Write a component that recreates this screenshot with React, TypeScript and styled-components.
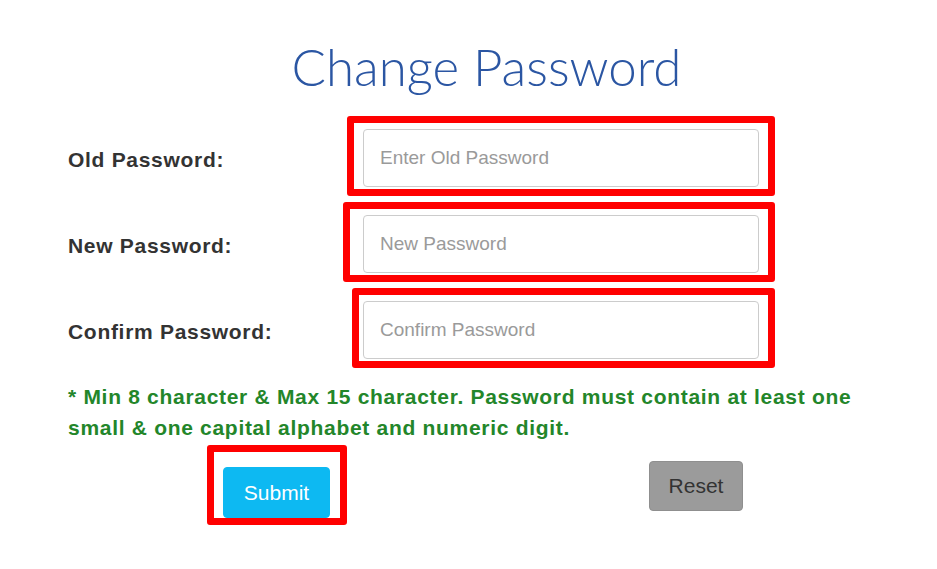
import React from 'react';
import styled, { createGlobalStyle } from 'styled-components';


const GlobalStyle = createGlobalStyle`
    body {
        margin: 0;
        background: #ffffff;
        font-family: 'Liberation Sans', Arial, sans-serif;
    }
`;

const Page = styled.div`
    width: 937px;
    height: 569px;
    padding-top: 37px;
    box-sizing: border-box;
    overflow: hidden;
`;

const Title = styled.h1`
    margin: 0 0 19px 0;
    padding-left: 36px;
    text-align: center;
    font-family: 'Lato', sans-serif;
    font-weight: 300;
    font-size: 51px;
    line-height: 60px;
    color: #2b56a3;
`;

const Form = styled.form`
    display: flex;
    flex-direction: column;
    gap: 6px;
    padding-left: 68px;
`;

const Row = styled.div`
    display: grid;
    grid-template-columns: 275px 432px;
    align-items: center;
`;

const Label = styled.label`
    padding-top: 8px;
    font-size: 21px;
    font-weight: bold;
    letter-spacing: 0.7px;
    color: #333333;
`;

const Highlight = styled.div<{ $inset : number }>`
    margin-left: ${p => p.$inset}px;
    padding: 6px 9px 2px ${p => 13 - p.$inset}px;
    border: 7px solid #ff0000;
    border-radius: 3px;
    display: flex;
`;

const Input = styled.input`
    width: 396px;
    height: 58px;
    box-sizing: border-box;
    padding: 0 16px;
    border: 1px solid #cccccc;
    border-radius: 4px;
    font-family: 'Liberation Sans', Arial, sans-serif;
    font-size: 19px;
    color: #555555;
    outline: none;

    &::placeholder {
        color: #9a9a9a;
    }
`;

const Hint = styled.p`
    margin: 7px 0 0 0;
    width: 810px;
    font-size: 21px;
    font-weight: bold;
    letter-spacing: 0.7px;
    line-height: 31px;
    color: #23862a;
`;

const Actions = styled.div`
    display: flex;
    align-items: center;
    margin-top: -4px;
    padding-left: 139px;
`;

const SubmitFrame = styled.div`
    padding: 15px 10px 0 9px;
    border: 7px solid #ff0000;
    border-radius: 3px;
`;

const Button = styled.button<{ $tone : 'primary' | 'muted' }>`
    border-radius: 4px;
    font-family: 'Liberation Sans', Arial, sans-serif;
    font-size: 21px;
    cursor: pointer;
    background: ${p => p.$tone === 'primary' ? '#0db9f2' : '#9b9b9b'};
    color: ${p => p.$tone === 'primary' ? '#ffffff' : '#333333'};
    border: 1px solid ${p => p.$tone === 'primary' ? '#0db9f2' : '#8f8f8f'};
`;

const SubmitButton = styled(Button)`
    width: 107px;
    height: 51px;
`;

const ResetButton = styled(Button)`
    width: 94px;
    height: 50px;
    margin-left: 302px;
    margin-top: 2px;
`;


interface Field
{
    label : string;
    placeholder : string;
    inset : number;
}

const fields : Field[] = [
    { label: 'Old Password:', placeholder: 'Enter Old Password', inset: 4 },
    { label: 'New Password:', placeholder: 'New Password', inset: 0 },
    { label: 'Confirm Password:', placeholder: 'Confirm Password', inset: 9 },
];


export default function App() : JSX.Element
{
    return (
        <Page>
            <GlobalStyle />
            <Title>Change Password</Title>
            <Form onSubmit={e => e.preventDefault()}>
                {fields.map(f => (
                    <Row key={f.label}>
                        <Label>{f.label}</Label>
                        <Highlight $inset={f.inset}>
                            <Input type="password" placeholder={f.placeholder} />
                        </Highlight>
                    </Row>
                ))}
                <Hint>
                    * Min 8 character &amp; Max 15 character. Password must contain at least one
                    small &amp; one capital alphabet and numeric digit.
                </Hint>
                <Actions>
                    <SubmitFrame>
                        <SubmitButton type="submit" $tone="primary">Submit</SubmitButton>
                    </SubmitFrame>
                    <ResetButton type="reset" $tone="muted">Reset</ResetButton>
                </Actions>
            </Form>
        </Page>
    );
}
